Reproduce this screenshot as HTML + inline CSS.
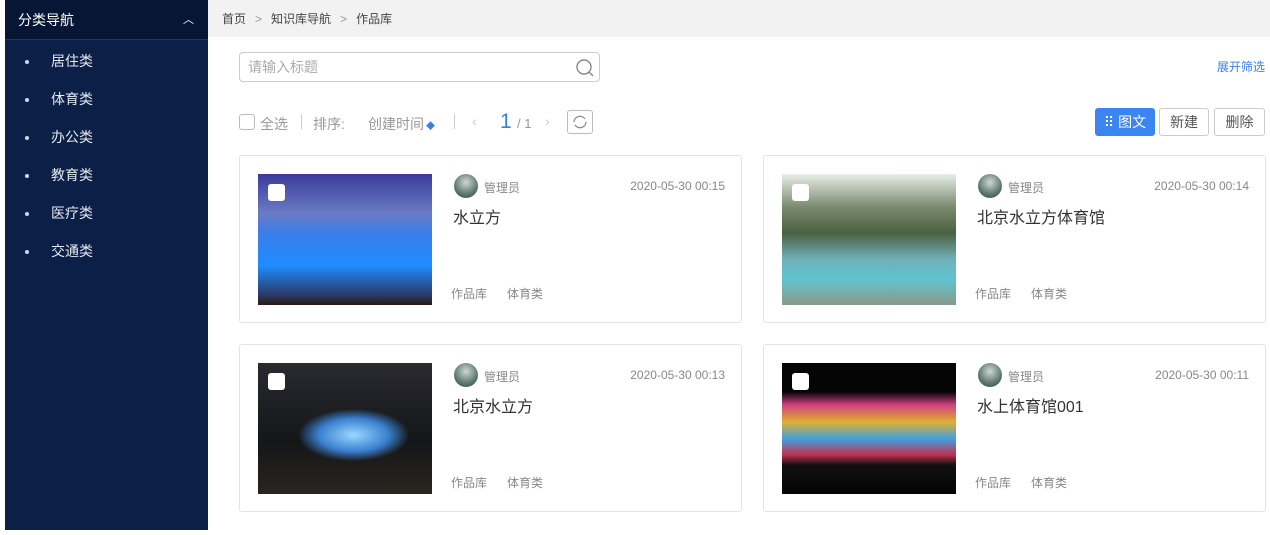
<!DOCTYPE html>
<html><head><meta charset="utf-8"><style>
*{margin:0;padding:0;box-sizing:border-box}
body{width:1270px;height:535px;background:#fff;font-family:"Liberation Sans","Noto Sans CJK SC",sans-serif;position:relative;overflow:hidden;color:#333}
.a{position:absolute}
#side{left:5px;top:0;width:203px;height:530px;background:#0c1f47}
#sh{left:5px;top:0;width:203px;height:40px;background:#071634;border-bottom:1px solid #24365a;color:#fff;font-size:14px;line-height:40px;padding-left:13px}
.mi{color:#e6e9f0;font-size:14px;left:25px}
.mi b{display:inline-block;width:4px;height:4px;border-radius:2px;background:#d0d6e2;margin-right:22px;vertical-align:middle}
#bc{left:208px;top:0;width:1062px;height:37px;background:#f2f2f2;font-size:12px;color:#444;line-height:40px;padding-left:14px}
#bc i{font-style:normal;color:#999;margin:0 9px}
.card{width:503px;height:168px;border:1px solid #e3e3e3;border-radius:3px;background:#fff}
.img{left:18px;top:18px;width:174px;height:131px}
.cb{left:10px;top:10px;width:17px;height:17px;background:#fff;border-radius:3px}
.av{left:214px;top:18px;width:24px;height:24px;border-radius:12px;background:radial-gradient(circle at 50% 35%,#cfd8d4,#5d7770 60%,#2e4541)}
.nm{left:244px;top:23px;font-size:12px;color:#888}
.dt{right:16px;top:23px;font-size:12px;color:#888}
.tt{left:213px;top:48px;font-size:16px;color:#333}
.tg{left:211px;top:129px;font-size:12px;color:#888;word-spacing:0}
.tg span{margin-right:20px}
.btn{top:108px;height:28px;border:1px solid #ccc;border-radius:3px;font-size:14px;line-height:26px;text-align:center;color:#555;background:#fff}
</style></head><body>
<div id="side" class="a"></div>
<div id="sh" class="a">分类导航<span style="position:absolute;right:14px;font-size:11px">︿</span></div>
<div class="a mi" style="top:51px"><b></b>居住类</div>
<div class="a mi" style="top:89px"><b></b>体育类</div>
<div class="a mi" style="top:127px"><b></b>办公类</div>
<div class="a mi" style="top:165px"><b></b>教育类</div>
<div class="a mi" style="top:203px"><b></b>医疗类</div>
<div class="a mi" style="top:241px"><b></b>交通类</div>
<div id="bc" class="a" style="line-height:38px">首页<i>&gt;</i>知识库导航<i>&gt;</i>作品库</div>

<div class="a" style="left:239px;top:52px;width:361px;height:30px;border:1px solid #ccc;border-radius:4px;font-size:14px;color:#aaa;line-height:28px;padding-left:8px">请输入标题
<svg class="a" style="right:4px;top:5px" width="20" height="20" viewBox="0 0 20 20"><circle cx="9" cy="9" r="7" fill="none" stroke="#888" stroke-width="1.4"/><path d="M14 14l4 4" stroke="#888" stroke-width="1.4"/></svg></div>
<div class="a" style="left:1217px;top:58px;font-size:12px;color:#3a7ee8">展开筛选</div>

<div class="a" style="left:239px;top:114px;width:16px;height:16px;border:1px solid #bbb;border-radius:3px"></div>
<div class="a" style="left:260px;top:114px;font-size:14px;color:#999">全选</div>
<div class="a" style="left:301px;top:114px;width:1px;height:15px;background:#ccc"></div>
<div class="a" style="left:313px;top:114px;font-size:14px;color:#999">排序:</div>
<div class="a" style="left:368px;top:114px;font-size:14px;color:#999">创建时间<span style="color:#3a7ee8;font-size:9px;margin-left:2px">◆</span></div>
<div class="a" style="left:454px;top:114px;width:1px;height:15px;background:#ccc"></div>
<div class="a" style="left:472px;top:113px;font-size:14px;color:#ccc">‹</div>
<div class="a" style="left:500px;top:110px;font-size:21px;color:#3a7ee8">1</div>
<div class="a" style="left:517px;top:116px;font-size:13px;color:#999">/ 1</div>
<div class="a" style="left:545px;top:113px;font-size:14px;color:#ccc">›</div>
<div class="a" style="left:567px;top:110px;width:26px;height:24px;border:1px solid #bbb;border-radius:3px"><svg width="24" height="22" viewBox="0 0 24 22"><path d="M6 11a6 6 0 0 1 11-3M18 11a6 6 0 0 1-11 3" fill="none" stroke="#888" stroke-width="1.3"/></svg></div>

<div class="a btn" style="left:1095px;width:60px;background:#3a85f0;border-color:#3a85f0;color:#fff">⠿ 图文</div>
<div class="a btn" style="left:1159px;width:50px">新建</div>
<div class="a btn" style="left:1214px;width:51px">删除</div>

<div class="a card" style="left:239px;top:155px">
<div class="a img" style="background:linear-gradient(180deg,#3a3a9a 0%,#6a7cc4 30%,#3b7de8 45%,#1f8cff 70%,#2a3b6a 92%,#2a1a10 100%)"><div class="a cb"></div></div>
<div class="a av"></div><div class="a nm">管理员</div><div class="a dt">2020-05-30 00:15</div>
<div class="a tt">水立方</div><div class="a tg"><span>作品库</span>体育类</div></div>

<div class="a card" style="left:763px;top:155px">
<div class="a img" style="background:linear-gradient(180deg,#e8eee8 0%,#7b8a70 25%,#4a6040 45%,#6fb0b8 65%,#5fc4d0 80%,#8a9a88 100%)"><div class="a cb"></div></div>
<div class="a av"></div><div class="a nm">管理员</div><div class="a dt">2020-05-30 00:14</div>
<div class="a tt">北京水立方体育馆</div><div class="a tg"><span>作品库</span>体育类</div></div>

<div class="a card" style="left:239px;top:344px">
<div class="a img" style="background:radial-gradient(ellipse 40% 25% at 55% 55%,#9ad8ff,#3a80d0 50%,transparent 80%),linear-gradient(180deg,#2a2a30,#141618 60%,#2a2520)"><div class="a cb"></div></div>
<div class="a av"></div><div class="a nm">管理员</div><div class="a dt">2020-05-30 00:13</div>
<div class="a tt">北京水立方</div><div class="a tg"><span>作品库</span>体育类</div></div>

<div class="a card" style="left:763px;top:344px">
<div class="a img" style="background:linear-gradient(180deg,#050505 0%,#050505 22%,#d04080 32%,#e0b030 45%,#40a0e0 58%,#c03050 70%,#101010 78%,#050505 100%)"><div class="a cb"></div></div>
<div class="a av"></div><div class="a nm">管理员</div><div class="a dt">2020-05-30 00:11</div>
<div class="a tt">水上体育馆001</div><div class="a tg"><span>作品库</span>体育类</div></div>
</body></html>
